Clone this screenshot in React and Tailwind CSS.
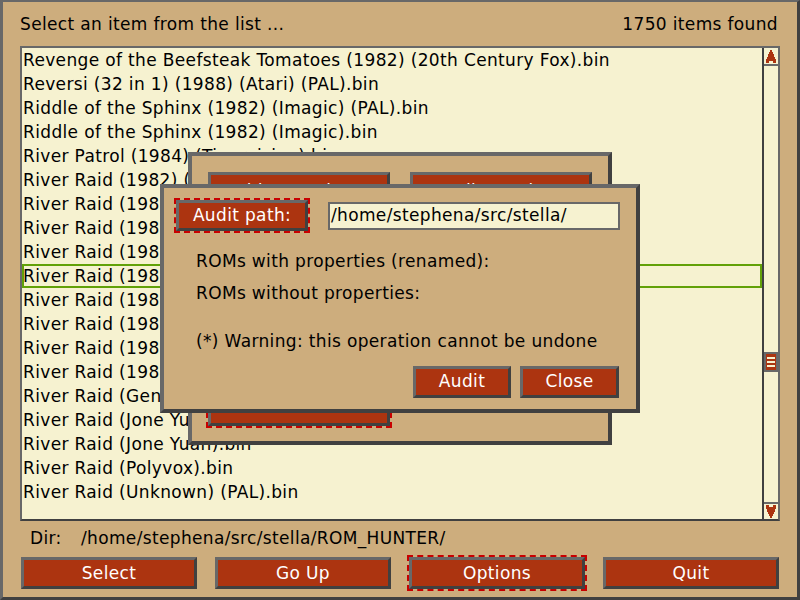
import React from "react";

const roms = [
  "Revenge of the Beefsteak Tomatoes (1982) (20th Century Fox).bin",
  "Reversi (32 in 1) (1988) (Atari) (PAL).bin",
  "Riddle of the Sphinx (1982) (Imagic) (PAL).bin",
  "Riddle of the Sphinx (1982) (Imagic).bin",
  "River Patrol (1984) (Tigervision).bin",
  "River Raid (1982) (Activision) [a1].bin",
  "River Raid (1982) (Activision) [a2].bin",
  "River Raid (1982) (Activision) [a3].bin",
  "River Raid (1982) (Activision) (PAL).bin",
  "River Raid (1982) (Activision).bin",
  "River Raid (1983) (Activision) [a1].bin",
  "River Raid (1983) (Activision) [a2].bin",
  "River Raid (1983) (Activision) (PAL).bin",
  "River Raid (1984) (Activision) (PAL).bin",
  "River Raid (Genus) (PAL).bin",
  "River Raid (Jone Yuan) (4K).bin",
  "River Raid (Jone Yuan).bin",
  "River Raid (Polyvox).bin",
  "River Raid (Unknown) (PAL).bin",
];

const SELECTED = 9;

function Btn({ label, className = "" }) {
  return (
    <div
      className={`flex items-center justify-center bg-[#ac3410] text-white whitespace-nowrap border-[3px] border-t-[#686868] border-l-[#686868] border-b-[#404040] border-r-[#404040] ${className}`}
    >
      {label}
    </div>
  );
}

function Focus({ children, className = "" }) {
  return <div className={`border-2 border-dashed border-[#c80000] ${className}`}>{children}</div>;
}

function UpArrow() {
  return (
    <svg width="12" height="13" viewBox="0 0 11 12" shapeRendering="crispEdges">
      <path d="M5 0H6V2H7V4H8V6H9V8H10V12H7V10H4V12H1V8H2V6H3V4H4V2H5Z" fill="#ac3410" />
    </svg>
  );
}

function DownArrow() {
  return (
    <svg width="12" height="13" viewBox="0 0 11 12" shapeRendering="crispEdges">
      <path d="M1 0H4V2H7V0H10V4H9V6H8V8H7V10H6V12H5V10H4V8H3V6H2V4H1Z" fill="#ac3410" />
    </svg>
  );
}

export default function App() {
  return (
    <div className="relative w-[800px] h-[600px] overflow-hidden flex flex-col bg-[#cdad7d] text-black text-[17px] tracking-[0.35px] font-['DejaVu_Sans',sans-serif] border-t-2 border-l-[3px] border-r-[3px] border-b-[3px] border-t-[#686868] border-l-[#686868] border-r-[#404040] border-b-[#404040]">
      {/* header */}
      <div className="h-[44px] pt-[2px] flex items-center justify-between pl-[17px] pr-[19px] whitespace-nowrap">
        <span>Select an item from the list ...</span>
        <span>1750 items found</span>
      </div>

      {/* rom list */}
      <div className="mx-[17px] h-[475px] flex bg-[#f6f2d0] border-2 border-t-[#686868] border-l-[#686868] border-r-[#686868] border-b-[#404040]">
        <div className="flex-1 overflow-hidden">
          {roms.map((name, i) =>
            i === SELECTED ? (
              <div key={i} className="h-[24px] leading-[20px] whitespace-nowrap border-2 border-[#62a108]">
                <span className="-ml-px">{name}</span>
              </div>
            ) : (
              <div key={i} className="h-[24px] leading-[24px] whitespace-nowrap pl-px">
                {name}
              </div>
            )
          )}
        </div>
        <div className="w-[16px] flex flex-col border-l-2 border-[#404040]">
          <div className="h-[18px] flex items-center justify-center border-b-2 border-[#686868]">
            <UpArrow />
          </div>
          <div className="flex-1">
            <div className="mt-[286px] h-[20px] border-2 border-[#686868] bg-[#ac3410] flex flex-col justify-center gap-[2px] px-[1px]">
              <div className="h-[2px] bg-[#f6f2d0]" />
              <div className="h-[2px] bg-[#f6f2d0]" />
              <div className="h-[2px] bg-[#f6f2d0]" />
            </div>
          </div>
          <div className="h-[17px] flex items-center justify-center border-t-2 border-[#686868]">
            <DownArrow />
          </div>
        </div>
      </div>

      {/* dir line */}
      <div className="h-[36px] flex items-center pl-[27px] whitespace-nowrap">
        <span className="w-[51px]">Dir:</span>
        <span>/home/stephena/src/stella/ROM_HUNTER/</span>
      </div>

      {/* bottom buttons */}
      <div className="h-[32px] grid grid-cols-4 gap-[18px] px-[18px]">
        <Btn label="Select" className="h-[32px] pt-[2px]" />
        <Btn label="Go Up" className="h-[32px] pt-[2px]" />
        <Focus className="-m-[2px]">
          <Btn label="Options" className="h-[32px] pt-[2px]" />
        </Focus>
        <Btn label="Quit" className="h-[32px] pt-[2px]" />
      </div>

      {/* options dialog (behind) */}
      <div className="absolute left-[185px] top-[150px] w-[424px] h-[293px] flex flex-col bg-[#cdad7d] border-4 border-t-[#686868] border-l-[#686868] border-b-[#404040] border-r-[#404040] pt-[16px] pl-[16px] pb-[13px]">
        <div className="flex gap-[20px]">
          <Btn label="Video Settings" className="w-[182px] h-[31px] pt-[9px]" />
          <Btn label="Audio Settings" className="w-[182px] h-[31px] pt-[9px]" />
        </div>
        <Focus className="mt-auto -ml-[2px] w-[186px]">
          <Btn label="Audit ROMs" className="h-[32px] pb-[6px]" />
        </Focus>
      </div>

      {/* audit dialog */}
      <div className="absolute left-[157px] top-[182px] w-[480px] h-[229px] flex flex-col bg-[#cdad7d] border-4 border-t-[#686868] border-l-[#686868] border-b-[#404040] border-r-[#404040]">
        <div className="mt-[10px] pl-[10px] flex items-center">
          <Focus>
            <Btn label="Audit path:" className="w-[132px] h-[31px]" />
          </Focus>
          <div className="ml-[18px] w-[292px] h-[28px] flex items-center pl-px bg-[#f6f2d0] border-2 border-[#686868] whitespace-nowrap">
            /home/stephena/src/stella/
          </div>
        </div>
        <div className="pl-[32px] whitespace-nowrap">
          <div className="mt-[16px] h-[24px] leading-[24px]">ROMs with properties (renamed):</div>
          <div className="mt-[8px] h-[24px] leading-[24px]">ROMs without properties:</div>
          <div className="mt-[24px] h-[24px] leading-[24px]">(*) Warning: this operation cannot be undone</div>
        </div>
        <div className="mt-[13px] pr-[17px] flex justify-end gap-[9px]">
          <Btn label="Audit" className="w-[98px] h-[32px]" />
          <Btn label="Close" className="w-[99px] h-[32px]" />
        </div>
      </div>
    </div>
  );
}
